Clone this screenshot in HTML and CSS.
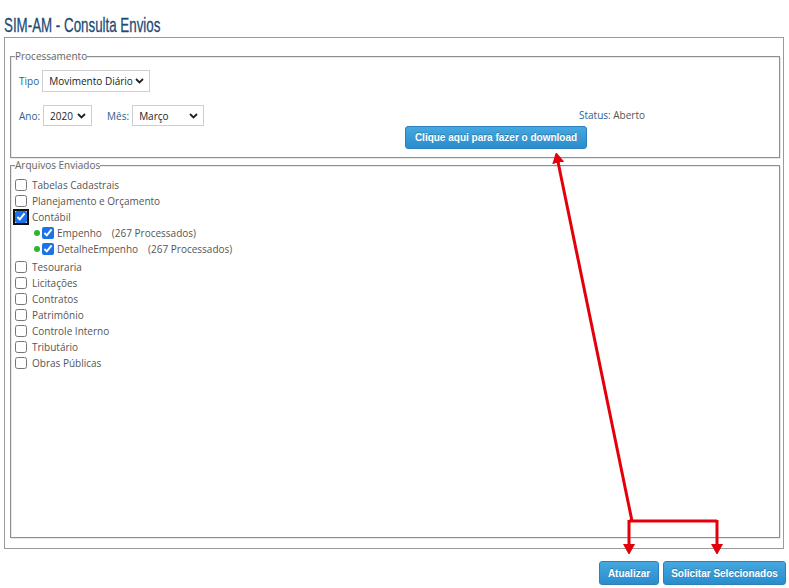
FILE: index.html
```html
<!DOCTYPE html>
<html lang="pt-BR">
<head>
<meta charset="utf-8">
<title>SIM-AM - Consulta Envios</title>
<link rel="stylesheet" href="styles.css">
</head>
<body>
<div class="page">
  <h1 class="title"><span class="title-text">SIM-AM - Consulta Envios</span></h1>
  <div class="outer">
    <fieldset class="box box-proc">
      <legend>Processamento</legend>
      <div class="row row-tipo">
        <label class="lbl">Tipo</label>
        <select class="sel sel-tipo"><option>Movimento Diário</option></select>
      </div>
      <div class="row row-data">
        <div class="left-group">
          <label class="lbl">Ano:</label>
          <select class="sel sel-ano"><option>2020</option></select>
          <label class="lbl lbl-mes">Mês:</label>
          <select class="sel sel-mes"><option>Março</option></select>
        </div>
        <div class="right-cell">
          <div class="status"><span class="status-lbl">Status:</span> Aberto</div>
          <button class="btn btn-download">Clique aqui para fazer o download</button>
        </div>
      </div>
    </fieldset>
    <fieldset class="box box-arq">
      <legend>Arquivos Enviados</legend>
      <ul class="list">
        <li class="item"><input type="checkbox" class="cb"><span>Tabelas Cadastrais</span></li>
        <li class="item"><input type="checkbox" class="cb"><span>Planejamento e Orçamento</span></li>
        <li class="item"><input type="checkbox" class="cb cb-focus" checked><span>Contábil</span></li>
        <li class="sublist">
          <div class="item sub"><span class="dot"></span><input type="checkbox" class="cb" checked><span>Empenho</span><span class="count">(267 Processados)</span></div>
          <div class="item sub"><span class="dot"></span><input type="checkbox" class="cb" checked><span>DetalheEmpenho</span><span class="count">(267 Processados)</span></div>
        </li>
        <li class="item"><input type="checkbox" class="cb"><span>Tesouraria</span></li>
        <li class="item"><input type="checkbox" class="cb"><span>Licitações</span></li>
        <li class="item"><input type="checkbox" class="cb"><span>Contratos</span></li>
        <li class="item"><input type="checkbox" class="cb"><span>Patrimônio</span></li>
        <li class="item"><input type="checkbox" class="cb"><span>Controle Interno</span></li>
        <li class="item"><input type="checkbox" class="cb"><span>Tributário</span></li>
        <li class="item"><input type="checkbox" class="cb"><span>Obras Públicas</span></li>
      </ul>
    </fieldset>
  </div>
  <div class="actions">
    <button class="btn btn-atualizar">Atualizar</button>
    <button class="btn btn-solicitar">Solicitar Selecionados</button>
  </div>
  <svg class="arrows" width="789" height="588" viewBox="0 0 789 588">
    <defs>
      <marker id="ah" markerWidth="10" markerHeight="12" refX="6" refY="6" orient="auto" markerUnits="userSpaceOnUse">
        <path d="M0,0 L11,6 L0,12 Z" fill="#e3000b"/>
      </marker>
    </defs>
    <g fill="none" stroke="#e3000b" stroke-width="3" stroke-linejoin="miter">
      <path d="M632,521 L557,157" marker-end="url(#ah)"/>
      <path d="M629,521 L717,521"/>
      <path d="M629,520 L629,550" marker-end="url(#ah)"/>
      <path d="M717,520 L717,550" marker-end="url(#ah)"/>
    </g>
  </svg>
</div>
</body>
</html>
```

FILE: styles.css
```css
* { box-sizing: border-box; }
html, body { margin: 0; padding: 0; background: #fff; }
body {
  font-family: "Open Sans", "Noto Sans", Arial, sans-serif;
  font-size: 10px;
  color: #555;
  width: 789px;
  height: 588px;
  overflow: hidden;
}
.page { position: relative; width: 789px; height: 588px; }

.title {
  margin: 0;
  padding: 14px 0 0 4px;
  height: 37px;
  font-family: "Liberation Sans", Arial, sans-serif;
  font-weight: normal;
  font-size: 21px;
  line-height: 22px;
  color: #1d4b74;
  white-space: nowrap;
}
.title-text {
  display: inline-block;
  transform: scaleX(0.635);
  transform-origin: 0 0;
  -webkit-text-stroke: 0.3px #1d4b74;
}

.outer {
  margin-left: 4px;
  width: 780px;
  height: 512px;
  border: 1px solid #9a9a9a;
  padding: 11px 3px 10px 5px;
  display: flex;
  flex-direction: column;
}

.box {
  margin: 0;
  border: 1px solid #8e8e8e;
  box-shadow: 1px 1px 0 #e8e8e8, inset 1px 1px 0 #e8e8e8;
  padding: 0 4px 0 4px;
  min-width: 0;
}
.box legend {
  padding: 0;
  font-size: 10px;
  line-height: 15px;
  color: #666;
}
.box-proc { height: 109px; padding-top: 6px; flex: none; }
.box-arq { flex: 1; padding-top: 4px; }

.row { display: flex; align-items: center; padding-left: 4px; }
.row-tipo { height: 22px; }
.row-data { margin-top: 13px; align-items: flex-start; }
.left-group { display: flex; align-items: center; height: 21px; }
.lbl { color: #2e6090; margin-right: 3px; }
.lbl-mes { margin-left: 15px; }

.sel {
  -webkit-appearance: none;
  appearance: none;
  font-family: inherit;
  font-size: 10px;
  color: #222;
  height: 22px;
  border: 1px solid #cfcfcf;
  border-radius: 0;
  background: #fff url("data:image/svg+xml;utf8,<svg xmlns='http://www.w3.org/2000/svg' width='9' height='6' viewBox='0 0 9 6'><path d='M1 1 L4.5 4.5 L8 1' fill='none' stroke='%23222' stroke-width='1.8'/></svg>") no-repeat right 5px center;
  padding: 0 12px 0 6px;
}
.sel-tipo { width: 108px; }
.sel-ano { width: 49px; height: 21px; }
.sel-mes { width: 72px; height: 21px; }

.right-cell {
  margin-left: auto;
  margin-right: 130px;
  width: 240px;
  display: flex;
  flex-direction: column;
}
.status { align-self: flex-end; height: 21px; line-height: 21px; color: #555; }
.status-lbl { color: #2e6090; }

.btn {
  font-family: "Liberation Sans", Arial, sans-serif;
  font-weight: bold;
  font-size: 10px;
  color: #fff;
  text-shadow: 0 -1px 0 rgba(0,0,0,0.25);
  background: linear-gradient(#45a8e0, #2b8ccc);
  border: 1px solid #2a80bd;
  border-radius: 3px;
  height: 24px;
  padding: 0 2px;
  white-space: nowrap;
  cursor: pointer;
}
.btn-download { align-self: flex-start; width: 182px; height: 23px; }

.list { list-style: none; margin: 0; padding: 0; }
.item {
  display: flex;
  align-items: center;
  height: 16px;
}
.cb {
  margin: 0 5px 0 0;
  width: 12px;
  height: 12px;
  accent-color: #1a73e8;
}
.cb-focus { outline: 2px solid #111; outline-offset: 0; border-radius: 2px; }
.sublist { margin-bottom: 2px; }
.sub { padding-left: 19px; }
.sub .cb { margin-right: 3px; }
.dot {
  width: 6px;
  height: 6px;
  border-radius: 50%;
  background: #2db52d;
  margin-right: 2px;
}
.count { margin-left: 10px; }

.actions {
  display: flex;
  justify-content: flex-end;
  gap: 4px;
  padding-right: 3px;
  margin-top: 12px;
}
.btn-atualizar { width: 60px; }
.btn-solicitar { width: 123px; }

.arrows { position: absolute; left: 0; top: 0; pointer-events: none; }
```
